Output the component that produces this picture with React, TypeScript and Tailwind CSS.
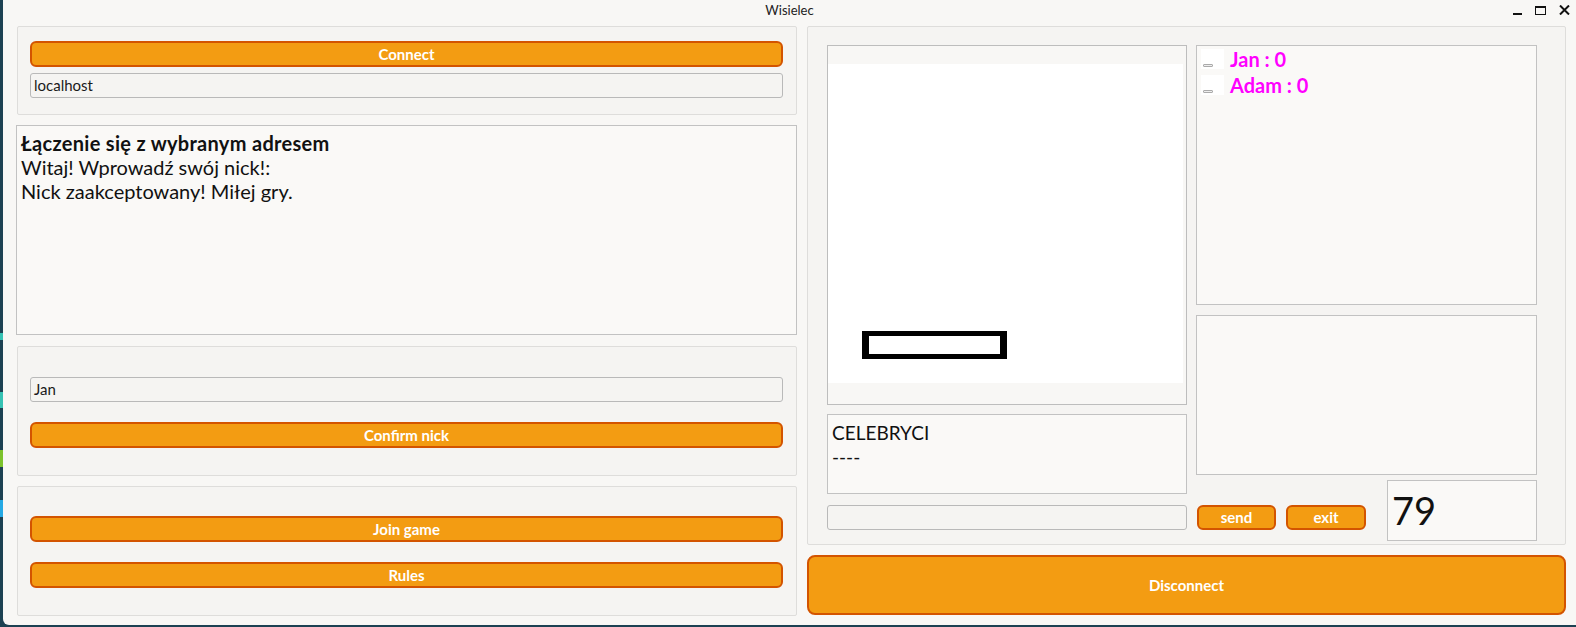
import React from "react";

const font = { fontFamily: "Lato, 'Open Sans', sans-serif" };

function OrangeButton({ label, className = "" }: { label: string; className?: string }) {
  return (
    <div
      className={`flex items-center justify-center rounded-[6px] border-2 border-[#d35400] bg-[#f39c12] text-[15px] font-bold text-white ${className}`}
    >
      {label}
    </div>
  );
}

function TextInput({ value = "", className = "" }: { value?: string; className?: string }) {
  return (
    <div
      className={`flex h-[25px] items-center rounded-[3px] border border-[#b9b9b9] bg-[#f5f4f2] pl-[3px] text-[15px] leading-none text-[#1a1a1a] ${className}`}
    >
      {value}
    </div>
  );
}

function Group({ children, className = "" }: { children: React.ReactNode; className?: string }) {
  return (
    <div className={`rounded-[2px] border border-[#dedddb] bg-[#f5f4f2] ${className}`}>{children}</div>
  );
}

export default function App() {
  return (
    <div className="flex h-[627px] w-[1576px] overflow-hidden bg-[#1c4152]" style={font}>
      {/* desktop strip on the left */}
      <div className="flex w-[3px] flex-col">
        <div className="h-[333px]" />
        <div className="h-[7px] bg-[#36c2b4]" />
        <div className="h-[52px]" />
        <div className="h-[16px] bg-[#36c2b4]" />
        <div className="h-[42px]" />
        <div className="h-[17px] bg-[#7cc22c]" />
        <div className="h-[33px]" />
        <div className="h-[17px] bg-[#25a9e4]" />
      </div>

      <div className="flex h-[625px] flex-1 flex-col rounded-bl-[6px] bg-[#f8f7f5]">
        {/* title bar */}
        <div className="relative flex h-[22px] items-center justify-center text-[13px] text-[#222]">
          Wisielec
          <div className="absolute right-[6px] top-[5px] flex items-center gap-[13px]">
            <div className="mt-[7px] h-[2px] w-[9px] bg-[#111]" />
            <div className="h-[9px] w-[11px] border border-t-2 border-[#111]" />
            <svg width="11" height="10" viewBox="0 0 11 10">
              <path d="M1 0.5 L10 9.5 M10 0.5 L1 9.5" stroke="#111" strokeWidth="2" />
            </svg>
          </div>
        </div>

        <div className="flex gap-[10px] pl-[13px] pt-[4px]">
          {/* left column */}
          <div className="flex w-[781px] flex-col">
            <Group className="ml-[1px] flex h-[89px] flex-col gap-[6px] pl-[12px] pr-[13px] pt-[14px]">
              <OrangeButton label="Connect" className="h-[26px]" />
              <TextInput value="localhost" />
            </Group>

            <div className="mt-[10px] h-[210px] border border-[#c2c2c2] bg-[#faf9f7] px-[4px] pt-[5px] text-[20px] leading-[24px] text-[#111]">
              <div className="font-bold tracking-[0.3px]">Łączenie się z wybranym adresem</div>
              <div>Witaj! Wprowadź swój nick!:</div>
              <div>Nick zaakceptowany! Miłej gry.</div>
            </div>

            <Group className="ml-[1px] mt-[11px] flex h-[130px] flex-col gap-[20px] pl-[12px] pr-[13px] pt-[30px]">
              <TextInput value="Jan" />
              <OrangeButton label="Confirm nick" className="h-[26px]" />
            </Group>

            <Group className="ml-[1px] mt-[10px] flex h-[130px] flex-col gap-[20px] pl-[12px] pr-[13px] pt-[29px]">
              <OrangeButton label="Join game" className="h-[26px]" />
              <OrangeButton label="Rules" className="h-[26px]" />
            </Group>
          </div>

          {/* right column */}
          <div className="flex w-[759px] flex-col">
            <Group className="flex h-[519px] gap-[9px] pl-[19px] pt-[18px]">
              <div className="flex w-[360px] flex-col">
                <div className="flex h-[360px] flex-col border border-[#bdbdbd] bg-[#f8f7f5] pt-[18px] pr-[3px]">
                  <div className="flex h-[319px] flex-col justify-end bg-white pb-[24px] pl-[34px]">
                    <div className="h-[28px] w-[145px] border-x-[7px] border-y-[5px] border-black" />
                  </div>
                </div>
                <div className="mt-[9px] h-[80px] border border-[#c2c2c2] bg-[#faf9f7] pl-[4px] pt-[6px] text-[19px] leading-[24px] text-[#111]">
                  <div>CELEBRYCI</div>
                  <div>----</div>
                </div>
                <TextInput className="mt-[11px]" />
              </div>

              <div className="flex w-[341px] flex-col">
                <div className="flex h-[260px] flex-col gap-[6px] border border-[#c2c2c2] bg-[#faf9f7] pl-[4px] pt-[3px]">
                  {["Jan : 0", "Adam : 0"].map((p) => (
                    <div key={p} className="flex h-[20px] items-center gap-[6px]">
                      <div className="flex h-[20px] w-[23px] items-end bg-white pb-[2px] pl-[2px]">
                        <div className="h-[3px] w-[10px] rounded-[1px] border border-[#aaa] bg-[#eee]" />
                      </div>
                      <span className="text-[20px] font-bold text-[#ff00ff]">{p}</span>
                    </div>
                  ))}
                </div>
                <div className="mt-[10px] h-[160px] border border-[#c2c2c2] bg-[#faf9f7]" />
                <div className="mt-[5px] flex h-[61px]">
                  <OrangeButton label="send" className="ml-[1px] mt-[25px] h-[25px] w-[79px]" />
                  <OrangeButton label="exit" className="ml-[10px] mt-[25px] h-[25px] w-[80px]" />
                  <div className="ml-[21px] flex h-[61px] w-[150px] items-center border border-[#c2c2c2] bg-[#faf9f7] pl-[4px] text-[38px] text-[#111]">
                    79
                  </div>
                </div>
              </div>
            </Group>

            <OrangeButton label="Disconnect" className="mt-[10px] h-[60px] rounded-[8px]" />
          </div>
        </div>
      </div>
    </div>
  );
}
